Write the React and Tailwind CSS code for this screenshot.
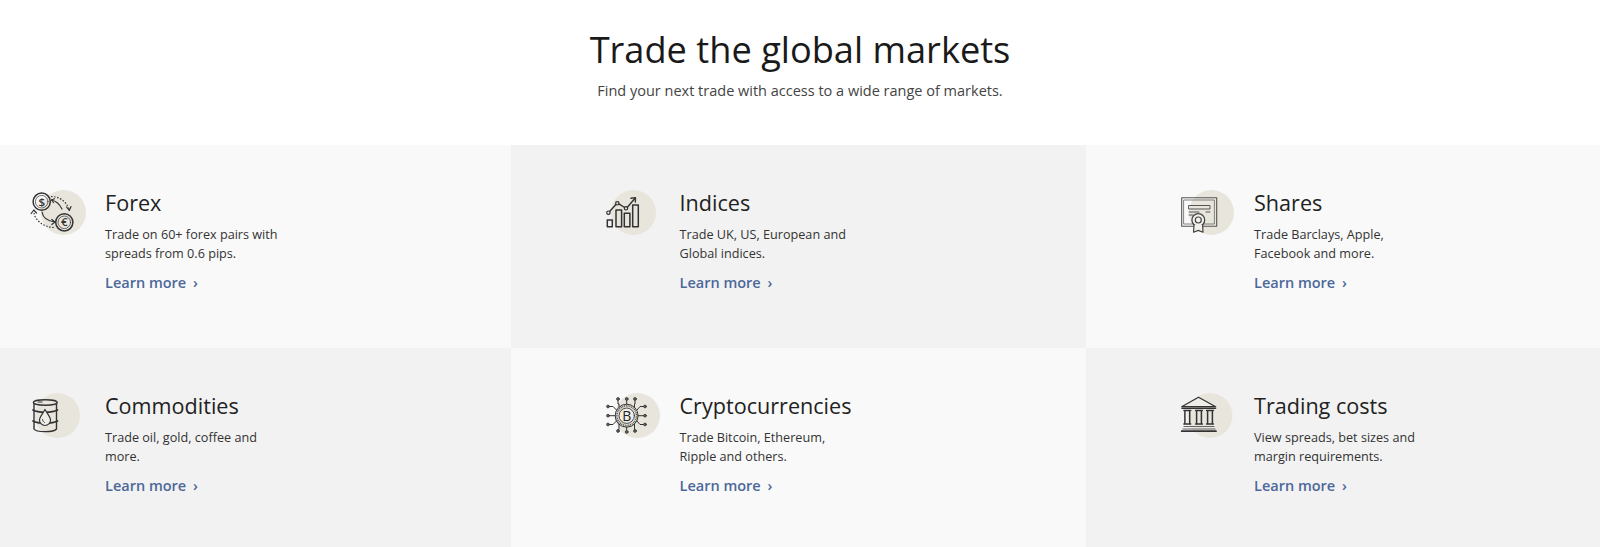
import React from 'react';

const Stroke = ({ children }) => (
  <g fill="none" stroke="#333333" strokeWidth="1" strokeLinecap="round" strokeLinejoin="round">{children}</g>
);

const IconFrame = ({ cx, children }) => (
  <svg width="60" height="50" viewBox="0 0 60 50" className="shrink-0">
    <circle cx={cx} cy="24.5" r="22.5" fill="#e8e5dc" />
    <Stroke>{children}</Stroke>
  </svg>
);

const ForexIcon = () => (
  <IconFrame cx={33.5}>
    <circle cx="11.7" cy="13.7" r="8.6" strokeWidth="1.5" />
    <circle cx="11.7" cy="13.7" r="6.3" strokeWidth="0.7" />
    <circle cx="34.3" cy="34.3" r="8.6" strokeWidth="1.5" />
    <circle cx="34.3" cy="34.3" r="6.3" strokeWidth="0.7" />
    <text x="11.7" y="17.8" textAnchor="middle" fontSize="11.5" fontWeight="600" fill="#333333" stroke="none" fontFamily="'Open Sans', sans-serif">$</text>
    <text x="34.3" y="38.4" textAnchor="middle" fontSize="11.5" fontWeight="600" fill="#333333" stroke="none" fontFamily="'Open Sans', sans-serif">€</text>
    <path d="M21 8.5 C29 8.5 36 13 39 21" strokeDasharray="1.5 1.6" strokeWidth="1.2" strokeLinecap="butt" />
    <path d="M36.5 19 L39.3 22.5 L41 18.6" strokeWidth="1.2" />
    <path d="M21.5 12 C26 13 30 17 32 21" strokeWidth="1.2" />
    <path d="M21.5 12 L24.5 10.8 M21.5 12 L23.5 14.5" strokeWidth="1.2" />
    <path d="M12 24 C13 30 18 33 24.5 34" strokeWidth="1.2" />
    <path d="M21.8 31.5 L25 34 L21.8 36.5" strokeWidth="1.2" />
    <path d="M4 25 C5 32 13 39 24 39.5" strokeDasharray="1.5 1.6" strokeWidth="1.2" strokeLinecap="butt" />
    <path d="M1.2 25.5 L3.8 22 L6.5 25" strokeWidth="1.2" />
  </IconFrame>
);

const IndicesIcon = () => (
  <IconFrame cx={28.5}>
    <rect x="2.3" y="32" width="5" height="6.7" strokeWidth="1.5" />
    <rect x="11" y="22" width="5.6" height="16.7" strokeWidth="1.5" />
    <rect x="19.3" y="25.3" width="5.6" height="13.4" strokeWidth="1.5" />
    <rect x="27.7" y="17" width="5.6" height="21.7" strokeWidth="1.5" />
    <path d="M4.6 23.4 L10.9 16.6 M13.8 15.9 L19.6 19.5 M22.4 19.2 L30 10.3" strokeWidth="1.4" />
    <circle cx="3.4" cy="24.7" r="1.7" strokeWidth="1.2" />
    <circle cx="12.3" cy="15.3" r="1.7" strokeWidth="1.2" />
    <circle cx="21" cy="20.3" r="1.7" strokeWidth="1.2" />
    <path d="M26 10.3 L30.5 9.6 L30.3 14" strokeWidth="1.4" />
  </IconFrame>
);

const SharesIcon = () => (
  <IconFrame cx={32.5}>
    <rect x="2.7" y="9.7" width="35" height="28.5" strokeWidth="1.1" stroke="#555555" />
    <rect x="5" y="12" width="30.4" height="24" strokeWidth="0.8" stroke="#666666" />
    <path d="M10 17.5 H31 V21 H10 Z" strokeWidth="1" stroke="#555555" />
    <path d="M10 24 H20 M10 27 H14 M27 24 H31" strokeWidth="1" stroke="#555555" />
    <circle cx="19.3" cy="32" r="6.4" fill="#f2f0ea" strokeWidth="1.3" stroke="#444444" />
    <circle cx="19.3" cy="32" r="3" strokeWidth="1.2" stroke="#444444" />
    <path d="M15 37 L14.5 44.2 L19.3 42.4 L24 44.2 L23.6 37" fill="#f2f0ea" strokeWidth="1.2" stroke="#444444" />
  </IconFrame>
);

const CommoditiesIcon = () => (
  <IconFrame cx={27.5}>
    <ellipse cx="15.3" cy="11.5" rx="12" ry="2.7" strokeWidth="1.4" />
    <path d="M4 13 V38 C6 41.5 24 41.5 26.5 38 V13" strokeWidth="1.4" />
    <path d="M3 19 C8 22 22 22 27.5 19 M3 30 C8 33 22 33 27.5 30" strokeWidth="1.7" />
    <path d="M15 18.5 C12.5 23 9.5 26 9.5 29 A5.5 5.5 0 0 0 20.5 29 C20.5 26 17.5 23 15 18.5 Z" strokeWidth="1.2" fill="#f0eee8" />
    <path d="M12.5 28.5 C12.5 30 13.5 31 14.5 31.5" strokeWidth="0.9" />
    <path d="M8 11 H12" strokeWidth="1.2" />
  </IconFrame>
);

const CryptoIcon = () => (
  <IconFrame cx={32.5}>
    <circle cx="21.7" cy="24.7" r="11.5" strokeWidth="1" />
    <circle cx="21.7" cy="24.7" r="9.8" strokeWidth="1.6" strokeDasharray="1 0.8" stroke="#555555" strokeLinecap="butt" />
    <circle cx="21.7" cy="24.7" r="7.7" strokeWidth="0.9" fill="#f0eee8" />
    <text x="21.7" y="29.8" textAnchor="middle" fontSize="14" fill="#222222" stroke="none" fontFamily="'Open Sans', sans-serif">B</text>
    <path d="M21.7 13 V9.5 M14 16 L14 13 H13 V9.5 M29.5 16 V13 H30 V9.5" strokeWidth="1" />
    <path d="M21.7 36 V40 M14 33 V38.5 H13 M29.5 33 V38.5 H30" strokeWidth="1" />
    <path d="M10 24.7 H4 M11.5 19 L8 15.5 H4 M11.5 30 L8 33.5 H4" strokeWidth="1" />
    <path d="M33.5 24.7 H39 M32 19 L35 15.5 H39 M32 30 L35 33.5 H39" strokeWidth="1" />
    {[[13, 8], [21.7, 8], [30, 8], [13, 40], [21.7, 41], [30, 40], [3, 15.5], [3, 24.7], [3, 33.5], [40, 15.5], [40, 24.7], [40, 33.5]].map(([x, y]) => (
      <circle key={`${x}-${y}`} cx={x} cy={y} r="1.4" fill="#666666" strokeWidth="0.8" />
    ))}
  </IconFrame>
);

const CostsIcon = () => (
  <IconFrame cx={31}>
    <path d="M2.7 15.7 L19.5 6.3 L36.7 15.7 Z" strokeWidth="1.3" fill="#efeee9" />
    <path d="M3 17.2 H36.5" strokeWidth="1.6" />
    {[8.3, 20, 31].map(x => (
      <g key={x}>
        <path d={`M${x - 2.4} 20.5 V32.5 M${x + 2.4} 20.5 V32.5`} strokeWidth="1.5" />
        <path d={`M${x - 3.4} 19.5 H${x + 3.4} M${x - 3.4} 33 H${x + 3.4}`} strokeWidth="1.5" />
      </g>
    ))}
    <path d="M5 35.5 H35 M4 38 H36" strokeWidth="1.2" stroke="#666666" />
    <path d="M2.7 40.2 H37" strokeWidth="1.7" />
  </IconFrame>
);

const cards = [
  { title: 'Forex', lines: ['Trade on 60+ forex pairs with', 'spreads from 0.6 pips.'], Icon: ForexIcon, bg: 'bg-[#f9f9f9]', pad: 'pl-[30px]' },
  { title: 'Indices', lines: ['Trade UK, US, European and', 'Global indices.'], Icon: IndicesIcon, bg: 'bg-[#f2f2f2]', pad: 'pl-[93.5px]' },
  { title: 'Shares', lines: ['Trade Barclays, Apple,', 'Facebook and more.'], Icon: SharesIcon, bg: 'bg-[#f9f9f9]', pad: 'pl-[93px]' },
  { title: 'Commodities', lines: ['Trade oil, gold, coffee and', 'more.'], Icon: CommoditiesIcon, bg: 'bg-[#f2f2f2]', pad: 'pl-[30px]' },
  { title: 'Cryptocurrencies', lines: ['Trade Bitcoin, Ethereum,', 'Ripple and others.'], Icon: CryptoIcon, bg: 'bg-[#f9f9f9]', pad: 'pl-[93.5px]' },
  { title: 'Trading costs', lines: ['View spreads, bet sizes and', 'margin requirements.'], Icon: CostsIcon, bg: 'bg-[#f2f2f2]', pad: 'pl-[93px]' },
];

const Card = ({ title, lines, Icon, bg, pad }) => (
  <div className={`${bg} ${pad} flex items-start gap-[15px] pt-[43px]`}>
    <Icon />
    <div>
      <h3 className="text-[21.6px] leading-[30px] text-[#222222]">{title}</h3>
      <p className="mt-[7px] text-[12.65px] leading-[19px] text-[#333333]">
        {lines[0]}<br />{lines[1]}
      </p>
      <a className="mt-[10px] block text-[14.5px] leading-[20px] font-semibold text-[#4c6899]">
        Learn more <span className="ml-[3px]">›</span>
      </a>
    </div>
  </div>
);

export default function App() {
  return (
    <div className="h-[547px] overflow-hidden bg-white font-['Open_Sans',sans-serif]">
      <div className="h-[145px] pt-[25px] text-center">
        <h1 className="text-[36.2px] leading-[48px] text-[#1a1a1a]">Trade the global markets</h1>
        <p className="mt-[8px] text-[14.5px] leading-[20px] text-[#444444]">Find your next trade with access to a wide range of markets.</p>
      </div>
      <div className="grid h-[402px] grid-cols-[511px_575px_514px] grid-rows-[203px_199px]">
        {cards.map(card => <Card key={card.title} {...card} />)}
      </div>
    </div>
  );
}
